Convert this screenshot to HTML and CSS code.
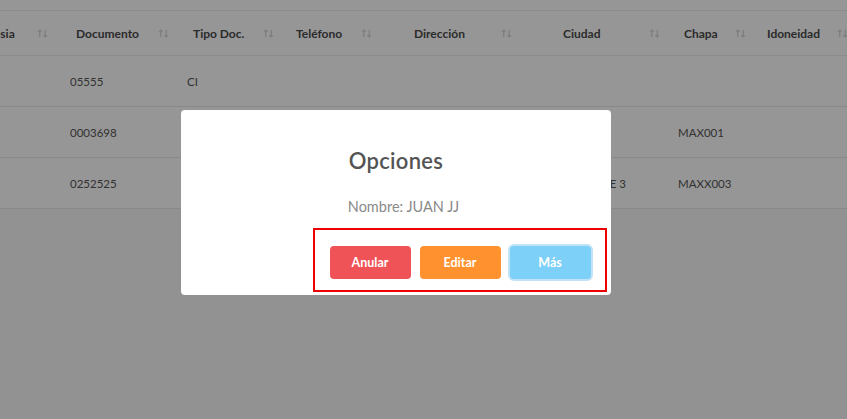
FILE: index.html
```html
<!DOCTYPE html>
<html lang="es">
<head>
<meta charset="utf-8">
<link rel="stylesheet" href="styles.css">
</head>
<body>
<div class="page">
  <table class="grid">
    <colgroup>
      <col class="c1"><col class="c2"><col class="c3"><col class="c4"><col class="c5"><col class="c6"><col class="c7"><col class="c8">
    </colgroup>
    <thead>
      <tr>
        <th><span>Fantasia</span><svg class="sort g22" viewBox="0 0 12 10"><path d="M3 9V1M0.8 3.2L3 1L5.2 3.2M9 1V9M6.8 6.8L9 9L11.2 6.8"/></svg></th>
        <th><span>Documento</span><svg class="sort" viewBox="0 0 12 10"><path d="M3 9V1M0.8 3.2L3 1L5.2 3.2M9 1V9M6.8 6.8L9 9L11.2 6.8"/></svg></th>
        <th><span>Tipo Doc.</span><svg class="sort" viewBox="0 0 12 10"><path d="M3 9V1M0.8 3.2L3 1L5.2 3.2M9 1V9M6.8 6.8L9 9L11.2 6.8"/></svg></th>
        <th><span>Teléfono</span><svg class="sort" viewBox="0 0 12 10"><path d="M3 9V1M0.8 3.2L3 1L5.2 3.2M9 1V9M6.8 6.8L9 9L11.2 6.8"/></svg></th>
        <th><span>Dirección</span><svg class="sort g36" viewBox="0 0 12 10"><path d="M3 9V1M0.8 3.2L3 1L5.2 3.2M9 1V9M6.8 6.8L9 9L11.2 6.8"/></svg></th>
        <th><span>Ciudad</span><svg class="sort g49" viewBox="0 0 12 10"><path d="M3 9V1M0.8 3.2L3 1L5.2 3.2M9 1V9M6.8 6.8L9 9L11.2 6.8"/></svg></th>
        <th><span>Chapa</span><svg class="sort g17" viewBox="0 0 12 10"><path d="M3 9V1M0.8 3.2L3 1L5.2 3.2M9 1V9M6.8 6.8L9 9L11.2 6.8"/></svg></th>
        <th><span>Idoneidad</span><svg class="sort g17" viewBox="0 0 12 10"><path d="M3 9V1M0.8 3.2L3 1L5.2 3.2M9 1V9M6.8 6.8L9 9L11.2 6.8"/></svg></th>
      </tr>
    </thead>
    <tbody>
      <tr><td></td><td>05555</td><td>CI</td><td></td><td></td><td></td><td></td><td></td></tr>
      <tr><td></td><td>0003698</td><td>CI</td><td></td><td></td><td></td><td>MAX001</td><td></td></tr>
      <tr><td></td><td>0252525</td><td>CI</td><td></td><td></td><td>EL PUENTE 3</td><td>MAXX003</td><td></td></tr>
    </tbody>
  </table>
</div>

<div class="overlay">
  <div class="modal">
    <h2 class="title">Opciones</h2>
    <p class="name">Nombre: JUAN JJ</p>
    <div class="actions">
      <button class="btn btn-red">Anular</button>
      <button class="btn btn-orange">Editar</button>
      <button class="btn btn-blue">Más</button>
    </div>
  </div>
</div>
</body>
</html>
```

FILE: styles.css
```css
html, body {
  margin: 0;
  padding: 0;
}
body {
  width: 847px;
  height: 419px;
  overflow: hidden;
  background: #f8f8f8;
  font-family: "Lato", "Open Sans", sans-serif;
  color: #4a4a4a;
}
.page {
  padding-top: 10px;
  margin-left: -35px;
  background: #fff;
}
.grid {
  border-collapse: collapse;
  table-layout: fixed;
  width: 896px;
  font-size: 11.5px;
}
.c1 { width: 105px; }
.c2 { width: 117px; }
.c3 { width: 103px; }
.c4 { width: 118px; }
.c5 { width: 149px; }
.c6 { width: 121px; }
.c7 { width: 83px; }
.c8 { width: 100px; }
.grid th {
  height: 44px;
  text-align: left;
  font-weight: 700;
  font-size: 12px;
  color: #4a4a4a;
  border-top: 1px solid #ececec;
  border-bottom: 1px solid #ececec;
  padding: 0 0 0 6px;
  white-space: nowrap;
  overflow: hidden;
}
.grid th span {
  display: inline-block;
  vertical-align: middle;
}
.sort {
  display: inline-block;
  vertical-align: middle;
  width: 11px;
  height: 9px;
  margin-left: 19px;
  fill: none;
  stroke: #c4c4c4;
  stroke-width: 1;
}
.sort.g17 { margin-left: 17px; }
.sort.g22 { margin-left: 22px; }
.sort.g36 { margin-left: 36px; }
.sort.g49 { margin-left: 49px; }
.grid td {
  height: 50px;
  padding: 0;
  border-bottom: 1px solid #e9e9e9;
  color: #555;
  white-space: nowrap;
  overflow: hidden;
}
.overlay {
  position: fixed;
  inset: 0;
  background: rgba(0, 0, 0, 0.41);
  display: flex;
  align-items: flex-start;
  padding: 110px 0 0 181px;
}
.modal {
  width: 430px;
  height: 185px;
  box-sizing: border-box;
  background: #fff;
  border-radius: 4px;
  display: flex;
  flex-direction: column;
  align-items: center;
}
.title {
  margin: 37px 0 0 0;
  font-size: 22px;
  font-weight: 600;
  color: #545454;
  line-height: 28px;
  letter-spacing: 0.3px;
}
.name {
  margin: 23px 0 0 15px;
  font-size: 14.5px;
  color: #8a8a8a;
  line-height: 18px;
}
.actions {
  align-self: flex-end;
  margin: 12px 4px 0 0;
  width: 294px;
  height: 64px;
  box-sizing: border-box;
  border: 2px solid #ee0000;
  display: flex;
  align-items: center;
  justify-content: center;
  gap: 9px;
  padding: 4px 0 0 0;
}
.btn {
  width: 81px;
  height: 33px;
  border: none;
  border-radius: 4px;
  color: #fff;
  font-family: "Lato", "Open Sans", sans-serif;
  font-weight: 700;
  font-size: 12.5px;
  padding: 0;
}
.btn-red { background: #ef5257; }
.btn-orange { background: #ff922e; }
.btn-blue {
  background: #7dd0f7;
  box-shadow: 0 0 0 2px #c1e3f6;
}
```
